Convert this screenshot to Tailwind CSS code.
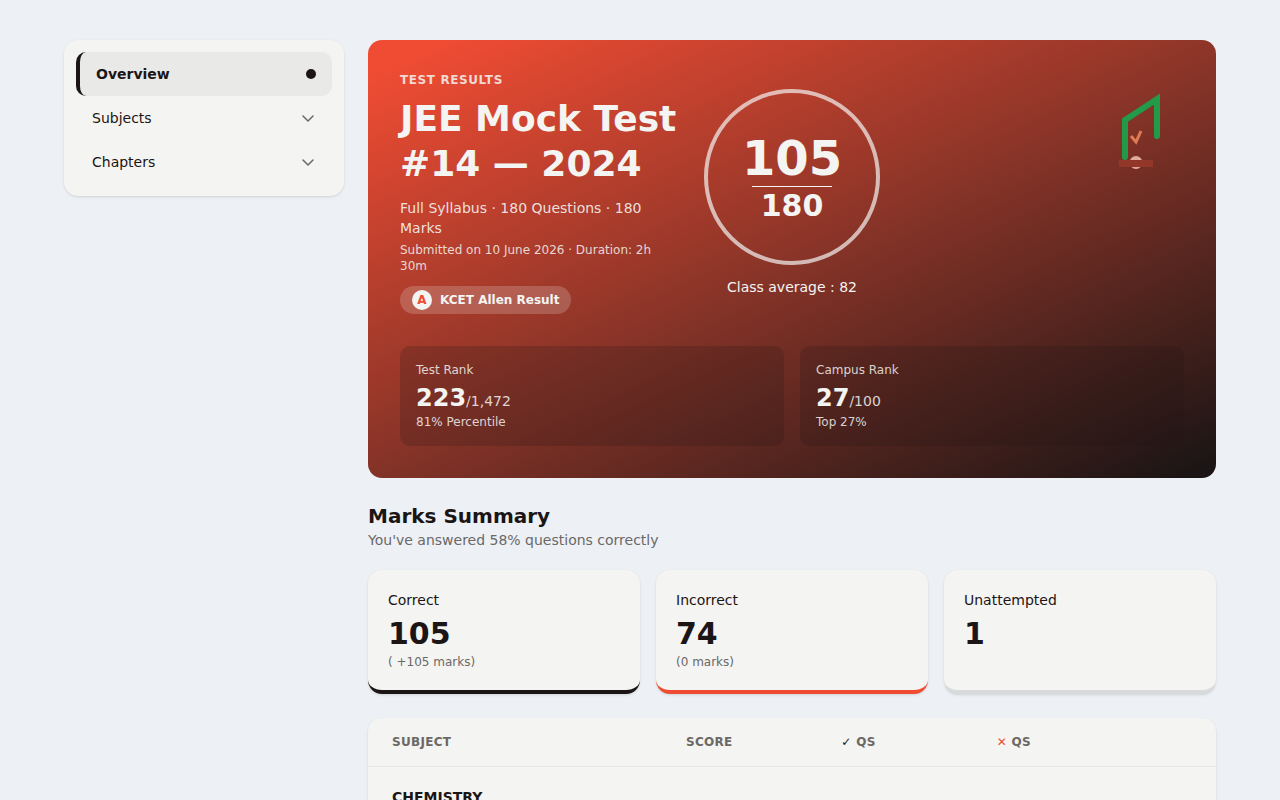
<!DOCTYPE html>
<html lang="en">
<head>
    <meta charset="UTF-8">
    <meta name="viewport" content="width=device-width, initial-scale=1.0">
    <title>Test Results</title>
    <script src="https://cdn.jsdelivr.net/npm/@tailwindcss/browser@4"></script>
</head>
<body class="bg-[#edf1f6] text-[#1c1515] font-['DejaVu_Sans',sans-serif] min-h-screen">
    <div class="max-w-[1152px] mx-auto py-10 flex items-start gap-6">
        <!-- Sidebar -->
        <nav class="w-[280px] shrink-0 bg-[#f4f4f2] rounded-[14px] p-3 shadow-sm text-sm">
            <a href="#overview" class="flex items-center justify-between px-4 py-3 rounded-[10px] border-l-4 border-[#1c1515] bg-[#e9e9e8] font-bold">
                Overview
                <span class="w-[10px] h-[10px] rounded-full bg-[#1c1515]"></span>
            </a>
            <button type="button" class="w-full flex items-center justify-between px-4 py-3 rounded-[10px]">
                Subjects
                <svg class="w-4 h-4 text-[#6b6866]" viewBox="0 0 16 16" fill="none" stroke="currentColor" stroke-width="1.5" stroke-linecap="round" stroke-linejoin="round">
                    <path d="M3 6l5 5 5-5"/>
                </svg>
            </button>
            <button type="button" class="w-full flex items-center justify-between px-4 py-3 rounded-[10px]">
                Chapters
                <svg class="w-4 h-4 text-[#6b6866]" viewBox="0 0 16 16" fill="none" stroke="currentColor" stroke-width="1.5" stroke-linecap="round" stroke-linejoin="round">
                    <path d="M3 6l5 5 5-5"/>
                </svg>
            </button>
        </nav>

        <main id="overview" class="flex-1 min-w-0">
            <!-- Result banner -->
            <section class="rounded-[14px] p-8 text-[#f4f4f2] bg-[linear-gradient(155deg,#f04c33_0%,#f04c33_4%,#893428_50%,#1c1515_98%)]">
                <div class="grid grid-cols-[1fr_auto_1fr] items-center gap-6">
                    <div>
                        <p class="text-xs font-bold tracking-wider text-[#f4f4f2]/85">TEST RESULTS</p>
                        <h1 class="mt-2 text-4xl leading-[45px] font-bold">JEE Mock Test #14 — 2024</h1>
                        <p class="mt-3 text-sm text-[#f4f4f2]/90">Full Syllabus · 180 Questions · 180 Marks</p>
                        <p class="mt-1 text-xs text-[#f4f4f2]/85">Submitted on 10 June 2026 · Duration: 2h 30m</p>
                        <div class="mt-3 inline-flex items-center gap-2 px-3 py-1 rounded-full bg-[#f4f4f2]/20 text-xs font-bold align-top">
                            <span class="w-5 h-5 rounded-full bg-[#f4f4f2] text-[#f04c33] flex items-center justify-center">A</span>
                            KCET Allen Result
                        </div>
                    </div>
                    <div class="flex flex-col items-center">
                        <div class="w-44 h-44 rounded-full border-4 border-[#f4f4f2]/70 flex flex-col items-center justify-center font-bold">
                            <span class="text-5xl leading-none">105</span>
                            <span class="w-20 h-px my-1 bg-[#f4f4f2]"></span>
                            <span class="text-3xl leading-none">180</span>
                        </div>
                        <p class="mt-3 text-sm">Class average : 82</p>
                    </div>
                    <svg class="w-22 h-20 mt-5 self-start justify-self-end" viewBox="0 0 88 80" fill="none">
                        <path d="M29 65V28L61 7v37" stroke="#229a48" stroke-width="6" stroke-linecap="round"/>
                        <path d="M35 44l5 6 5-11" stroke="#e07a52" stroke-width="3"/>
                        <circle cx="40" cy="70.5" r="6.5" fill="#e0aa9c"/>
                        <path d="M23 68h34v7H23z" fill="#933728"/>
                    </svg>
                </div>
                <div class="mt-8 grid grid-cols-2 gap-4">
                    <div class="rounded-[10px] p-4 bg-[#1c1515]/20">
                        <p class="text-xs text-[#f4f4f2]/85">Test Rank</p>
                        <p class="mt-1 text-2xl font-bold">223<span class="text-sm font-normal text-[#f4f4f2]/85">/1,472</span></p>
                        <p class="text-xs text-[#f4f4f2]/85">81% Percentile</p>
                    </div>
                    <div class="rounded-[10px] p-4 bg-[#1c1515]/20">
                        <p class="text-xs text-[#f4f4f2]/85">Campus Rank</p>
                        <p class="mt-1 text-2xl font-bold">27<span class="text-sm font-normal text-[#f4f4f2]/85">/100</span></p>
                        <p class="text-xs text-[#f4f4f2]/85">Top 27%</p>
                    </div>
                </div>
            </section>

            <!-- Marks summary -->
            <section class="mt-6">
                <h2 class="text-xl font-bold">Marks Summary</h2>
                <p class="text-sm text-[#6b6866]">You've answered 58% questions correctly</p>
                <div class="mt-5 grid grid-cols-3 gap-4">
                    <div class="rounded-[14px] p-5 bg-[#f4f4f2] border-b-4 border-[#1c1515] shadow-sm">
                        <p class="text-sm">Correct</p>
                        <p class="mt-1 text-3xl leading-10 font-bold">105</p>
                        <p class="text-xs text-[#6b6866]">( +105 marks)</p>
                    </div>
                    <div class="rounded-[14px] p-5 bg-[#f4f4f2] border-b-4 border-[#f04c33] shadow-sm">
                        <p class="text-sm">Incorrect</p>
                        <p class="mt-1 text-3xl leading-10 font-bold">74</p>
                        <p class="text-xs text-[#6b6866]">(0 marks)</p>
                    </div>
                    <div class="rounded-[14px] p-5 bg-[#f4f4f2] border-b-4 border-[#d9dbda] shadow-sm">
                        <p class="text-sm">Unattempted</p>
                        <p class="mt-1 text-3xl leading-10 font-bold">1</p>
                    </div>
                </div>
            </section>

            <!-- Subject table -->
            <section class="mt-6 rounded-[14px] bg-[#f4f4f2] shadow-sm overflow-hidden">
                <table class="w-full table-fixed text-left">
                    <thead class="text-xs text-[#6b6866] tracking-wide">
                        <tr class="border-b border-[#e7e7e6]">
                            <th class="w-[37.5%] pl-6 py-4">SUBJECT</th>
                            <th class="py-4">SCORE</th>
                            <th class="py-4"><span class="text-[#1c1515]">✓</span> QS</th>
                            <th class="py-4"><span class="text-[#f04c33]">✕</span> QS</th>
                            <td class="w-16"></td>
                        </tr>
                    </thead>
                    <tbody>
                        <tr>
                            <th colspan="5" class="px-6 py-5 text-sm font-bold">CHEMISTRY</th>
                        </tr>
                    </tbody>
                </table>
            </section>
        </main>
    </div>
</body>
</html>
